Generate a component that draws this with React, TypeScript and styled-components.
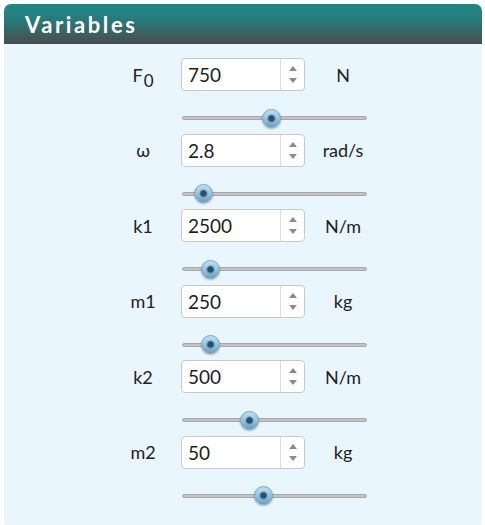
import React, { useState } from 'react';
import styled, { createGlobalStyle } from 'styled-components';

const GlobalStyle = createGlobalStyle`
  body {
    margin: 0;
    background: #ffffff;
    font-family: Lato, "Open Sans", sans-serif;
  }
`;

const Panel = styled.section`
  margin: 4px 3px 4px 4px;
  border-radius: 7px;
  overflow: hidden;
  background: #e9f6fe;
`;

const Header = styled.header`
  height: 40px;
  display: flex;
  align-items: center;
  padding-left: 21px;
  background: linear-gradient(to bottom, #1f8788 0%, #277a7b 40%, #4a4c4c 100%);
`;

const Title = styled.h2`
  margin: 0;
  color: #ffffff;
  font-family: Lato, sans-serif;
  font-weight: 700;
  font-size: 22px;
  letter-spacing: 2.6px;
`;

const Body = styled.div`
  display: grid;
  grid-template-columns: 76px 124px 76px;
  justify-content: center;
  padding: 14px 0 17px;
`;

const Label = styled.div`
  display: flex;
  align-items: center;
  justify-content: center;
  height: 33px;
  font-size: 18px;
  color: #222;
`;

const LabelText = styled.span`
  sub {
    font-size: 17px;
    vertical-align: -5px;
    line-height: 0;
    margin-left: 1px;
  }
`;

const NumberBox = styled.div`
  display: flex;
  height: 33px;
  box-sizing: border-box;
  border: 1px solid #c9c9c9;
  border-radius: 4px;
  background: #ffffff;
  overflow: hidden;
`;

const NumberText = styled.input`
  flex: 1;
  min-width: 0;
  border: none;
  outline: none;
  padding: 0 0 0 6px;
  font-family: Lato, sans-serif;
  font-size: 19px;
  color: #1e1e1e;
  background: transparent;
`;

const Spinner = styled.div`
  width: 23px;
  border-left: 1px solid #dcdcdc;
  display: flex;
  flex-direction: column;
  align-items: center;
  justify-content: center;
  gap: 7px;
`;

const Arrow = styled.span<{ $up?: boolean }>`
  width: 0;
  height: 0;
  border-left: 4.5px solid transparent;
  border-right: 4.5px solid transparent;
  ${p => (p.$up ? 'border-bottom: 5px solid #8a8a8a;' : 'border-top: 5px solid #8a8a8a;')}
`;

const SliderCell = styled.div`
  grid-column: 2 / 4;
  padding: 17px 0 5.5px 1px;
  width: 185px;
`;

const Range = styled.input`
  -webkit-appearance: none;
  appearance: none;
  display: block;
  width: 185px;
  height: 20px;
  margin: 0;
  background: transparent;
  &::-webkit-slider-runnable-track {
    height: 4px;
    border-radius: 3px;
    background: #c4c4c4;
    border: 1px solid #a9a9a9;
  }
  &::-webkit-slider-thumb {
    -webkit-appearance: none;
    width: 19px;
    height: 19px;
    margin-top: -8.5px;
    border-radius: 50%;
    border: 1px solid #7aa6c2;
    box-sizing: border-box;
    background: radial-gradient(circle at 50% 50%, #27506a 0, #27506a 2.5px, #5c8fb0 3.5px, transparent 4.5px),
      linear-gradient(to bottom, #c2def0 0%, #93c0dc 55%, #6e9fbf 100%);
    box-shadow: 0 1px 2px rgba(0, 0, 0, 0.3);
  }
`;

interface Variable {
  key: string;
  label: React.ReactNode;
  unit: string;
  value: string;
  pos: number;
}

const variables: Variable[] = [
  { key: 'F0', label: <>F<sub>0</sub></>, unit: 'N', value: '750', pos: 48 },
  { key: 'w', label: 'ω', unit: 'rad/s', value: '2.8', pos: 6.6 },
  { key: 'k1', label: 'k1', unit: 'N/m', value: '2500', pos: 11 },
  { key: 'm1', label: 'm1', unit: 'kg', value: '250', pos: 11 },
  { key: 'k2', label: 'k2', unit: 'N/m', value: '500', pos: 35 },
  { key: 'm2', label: 'm2', unit: 'kg', value: '50', pos: 43 },
];

const VariableRow = ({ v }: { v: Variable }) => {
  const [pos, setPos] = useState(v.pos);
  return (
    <>
      <Label>
        <LabelText>{v.label}</LabelText>
      </Label>
      <NumberBox>
        <NumberText defaultValue={v.value} />
        <Spinner>
          <Arrow $up />
          <Arrow />
        </Spinner>
      </NumberBox>
      <Label>{v.unit}</Label>
      <SliderCell>
        <Range
          type="range"
          min={0}
          max={100}
          step={0.1}
          value={pos}
          onChange={e => setPos(Number(e.target.value))}
        />
      </SliderCell>
    </>
  );
};

const App = () => (
  <>
    <GlobalStyle />
    <Panel>
      <Header>
        <Title>Variables</Title>
      </Header>
      <Body>
        {variables.map(v => (
          <VariableRow key={v.key} v={v} />
        ))}
      </Body>
    </Panel>
  </>
);

export default App;
